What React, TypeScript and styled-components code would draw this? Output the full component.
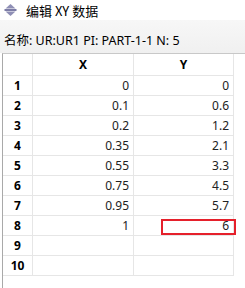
import React from "react";
import styled, { createGlobalStyle } from "styled-components";

const Global = createGlobalStyle`
  html, body { margin: 0; padding: 0; background: #ffffff; }
  body { font-family: "Noto Sans", "Noto Sans CJK SC", sans-serif; overflow: hidden; }
`;

const Page = styled.div`
  width: 245px;
  height: 288px;
  display: flex;
  flex-direction: column;
  background: #ffffff;
`;

const TitleBar = styled.div`
  height: 20px;
  display: flex;
  align-items: center;
  gap: 9px;
  padding-left: 4px;
  font-family: "Noto Sans CJK SC", sans-serif;
  font-size: 13px;
  color: #000;
`;

const InfoBar = styled.div`
  height: 33px;
  box-sizing: border-box;
  padding: 10px 0 0 4px;
  background: linear-gradient(#f7f7f7, #f0f0f0);
  font-family: "Noto Sans", "Noto Sans CJK SC", sans-serif;
  font-size: 12.5px;
  color: #000;
  white-space: nowrap;
`;

const TableArea = styled.div`
  flex: 1;
  margin-left: 2px;
  border-left: 1px solid #a9a9a9;
  border-top: 1px solid #c8c8c8;
  background: #fff;
`;

const Grid = styled.div`
  display: grid;
  grid-template-columns: 30px 101px 100px;
  grid-auto-rows: 20px;
  grid-template-rows: 22px;
`;

const Cell = styled.div<{ $head?: boolean; $align?: "center" | "right" }>`
  position: relative;
  box-sizing: border-box;
  border-right: 1px solid #e6e6e6;
  border-bottom: 1px solid #e6e6e6;
  display: flex;
  align-items: center;
  justify-content: ${(p) => (p.$align === "right" ? "flex-end" : "center")};
  padding-right: ${(p) => (p.$align === "right" ? "4px" : "0")};
  font-family: "Noto Sans", "Open Sans", sans-serif;
  font-size: 12px;
  font-weight: ${(p) => (p.$head ? 700 : 400)};
  color: ${(p) => (p.$head ? "#000" : "#222")};
`;

const Selection = styled.div`
  position: absolute;
  left: 27px;
  top: 3px;
  width: 75px;
  height: 16px;
  box-sizing: border-box;
  border: 2px solid #e5202b;
  pointer-events: none;
`;

const Icon = () => (
  <svg width="13" height="12" viewBox="0 0 13 12">
    <polygon points="6.5,0 11.5,4.5 1.5,4.5" fill="#8f8fb5" />
    <rect x="0.5" y="5" width="12" height="2" fill="#7c7ca6" />
    <polygon points="6.5,12 11.5,7.5 1.5,7.5" fill="#8f8fb5" />
  </svg>
);

const rows: [string, string][] = [
  ["0", "0"],
  ["0.1", "0.6"],
  ["0.2", "1.2"],
  ["0.35", "2.1"],
  ["0.55", "3.3"],
  ["0.75", "4.5"],
  ["0.95", "5.7"],
  ["1", "6"],
  ["", ""],
  ["", ""],
];

export default function App() {
  return (
    <Page>
      <Global />
      <TitleBar>
        <Icon />
        <span>编辑 XY 数据</span>
      </TitleBar>
      <InfoBar>名称: UR:UR1 PI: PART-1-1 N: 5</InfoBar>
      <TableArea>
        <Grid>
          <Cell $head />
          <Cell $head>X</Cell>
          <Cell $head>Y</Cell>
          {rows.map(([x, y], i) => (
            <React.Fragment key={i}>
              <Cell $head>{i + 1}</Cell>
              <Cell $align="right">{x}</Cell>
              <Cell $align="right">
                {y}
                {i === 7 && <Selection />}
              </Cell>
            </React.Fragment>
          ))}
        </Grid>
      </TableArea>
    </Page>
  );
}
